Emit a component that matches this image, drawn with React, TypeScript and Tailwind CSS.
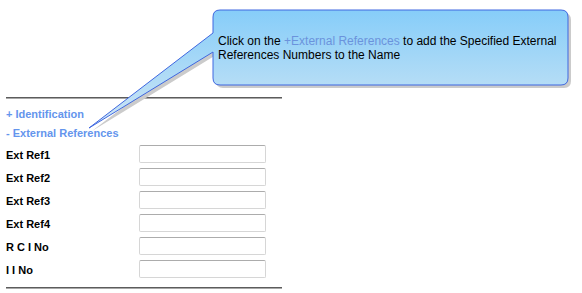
const fields = ["Ext Ref1", "Ext Ref2", "Ext Ref3", "Ext Ref4", "R C I No", "I I No"];

const Callout = () => {
  const shape =
    "M220 10 H561 Q568 10 568 17 V78 Q568 85 561 85 H220 Q213 85 213 78 V52 L89 128 L213 33 V17 Q213 10 220 10 Z";
  return (
    <>
      <svg
        className="absolute left-0 top-0 pointer-events-none"
        width="582"
        height="293"
        viewBox="0 0 582 293"
      >
        <defs>
          <linearGradient id="calloutFill" x1="0" y1="0" x2="0" y2="1">
            <stop offset="0" stopColor="#86cdf9" />
            <stop offset="1" stopColor="#d0e6f4" />
          </linearGradient>
        </defs>
        <path d={shape} transform="translate(3 3)" fill="#cbcbcb" />
        <path d={shape} fill="url(#calloutFill)" stroke="#3f67e0" strokeWidth="1" />
      </svg>
      <div className="absolute left-[218px] top-[34px] w-[345px] text-[12px] leading-[14px] text-black font-['Liberation_Sans',Arial,sans-serif]">
        Click on the <span className="text-[#6b93dc]">+External References</span> to add the
        Specified External References Numbers to the Name
      </div>
    </>
  );
};

const App = () => {
  return (
    <div className="relative w-[582px] h-[293px] bg-white overflow-hidden font-['Liberation_Sans',Arial,sans-serif]">
      <div className="pt-[97px] pl-[6px] w-[282px]">
        <div className="h-[2px] border-t border-t-[#5c5c5c] border-b border-b-[#a8a8a8]" />
        <div className="mt-[6px] text-[11px] font-bold text-[#6495ed]">
          <div className="leading-[19px]">+ Identification</div>
          <div className="leading-[19px]">- External References</div>
        </div>
        <div className="mt-[2px]">
          {fields.map((f) => (
            <div key={f} className="flex items-center h-[18px] mb-[5px]">
              <span className="w-[133px] pt-[3px] text-[11px] font-bold text-black">{f}</span>
              <input
                type="text"
                className="w-[127px] h-[18px] border border-[#d6d6d6] border-t-[#acacac] rounded-[2px] bg-white outline-none"
              />
            </div>
          ))}
        </div>
        <div className="mt-[9px] h-[2px] border-t border-t-[#5c5c5c] border-b border-b-[#a8a8a8]" />
      </div>
      <Callout />
    </div>
  );
};

export default App;
